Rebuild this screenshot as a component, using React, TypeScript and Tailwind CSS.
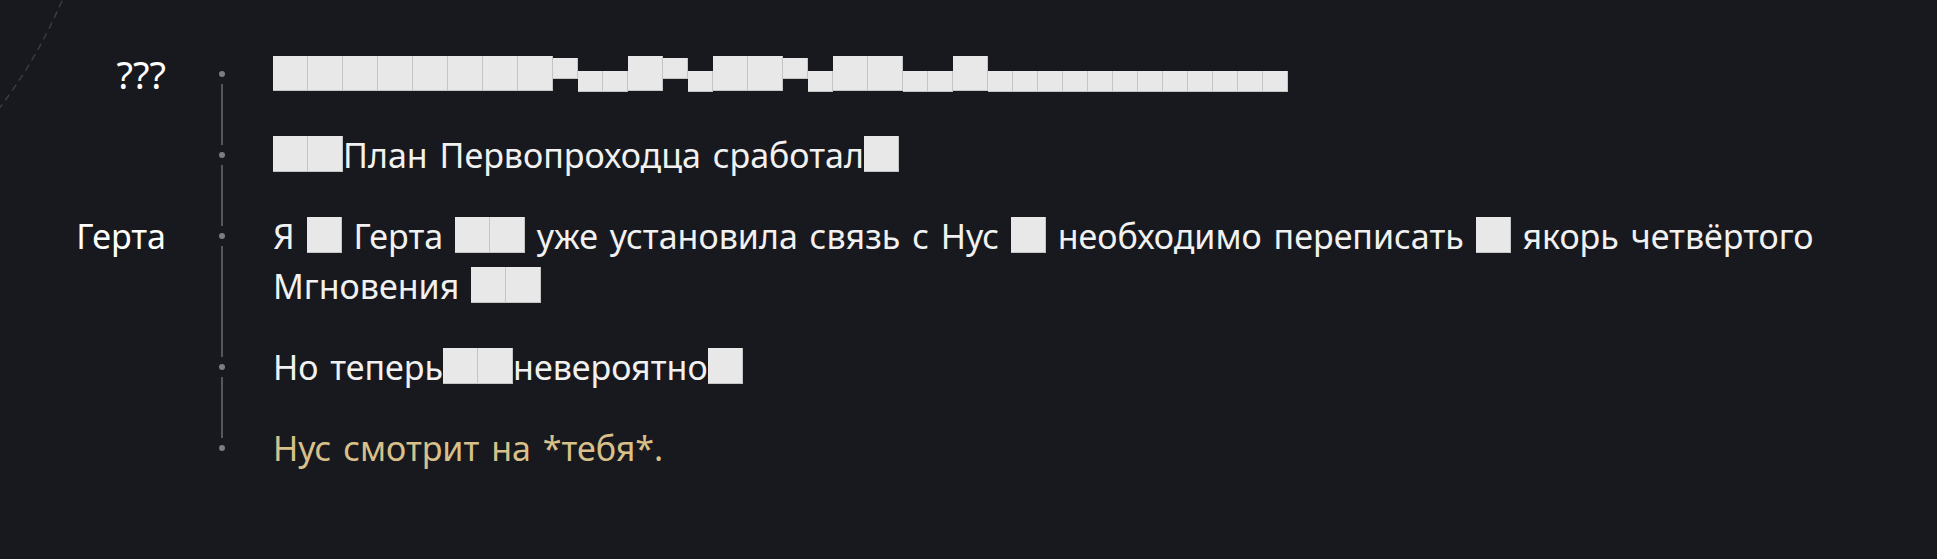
type Piece = string | { box: number };

interface Entry {
  speaker?: string;
  glitch?: boolean;
  gold?: boolean;
  parts?: Piece[];
}

// F = full tofu, T = short raised, L = short lowered
const glitchRow = 'FFFFFFFFTLLFTLFFTLFFLLF' + 'L'.repeat(12);

const entries: Entry[] = [
  { speaker: '???', glitch: true },
  { parts: [{ box: 2 }, 'План Первопроходца сработал', { box: 1 }] },
  {
    speaker: 'Герта',
    parts: [
      'Я ',
      { box: 1 },
      ' Герта ',
      { box: 2 },
      ' уже установила связь с Нус ',
      { box: 1 },
      ' необходимо переписать ',
      { box: 1 },
      ' якорь четвёртого Мгновения ',
      { box: 2 },
    ],
  },
  { parts: ['Но теперь', { box: 2 }, 'невероятно', { box: 1 }] },
  { gold: true, parts: ['Нус смотрит на *тебя*.'] },
];

function Tofu({ count }: { count: number }) {
  return (
    <>
      {Array.from({ length: count }).map((_, i) => (
        <span
          key={i}
          className="inline-block w-[35px] h-[36px] align-[-4px] bg-[#e7e8e7] shadow-[inset_-1px_-1px_0_#c3c4c3]"
        />
      ))}
    </>
  );
}

function GlitchLine() {
  return (
    <div className="flex h-[50px] items-start pt-[7px]">
      {glitchRow.split('').map((k, i) => {
        if (k === 'F') {
          return <span key={i} className="w-[35px] h-[35px] bg-[#e7e8e7] shadow-[inset_-1px_-1px_0_#c3c4c3]" />;
        }
        if (k === 'T') {
          return <span key={i} className="w-[25px] h-[21px] mt-[2px] bg-[#e7e8e7] shadow-[inset_-1px_-1px_0_#c3c4c3]" />;
        }
        return <span key={i} className="w-[25px] h-[21px] mt-[15px] bg-[#e7e8e7] shadow-[inset_-1px_-1px_0_#c3c4c3]" />;
      })}
    </div>
  );
}

export default function App() {
  return (
    <div className="relative w-full h-[559px] overflow-hidden bg-[#18191e] text-[#f1f1f1] font-['Noto_Sans',sans-serif] text-[34px] leading-[50px] [word-spacing:3px]">
      <svg className="absolute left-0 top-0" width="80" height="120" viewBox="0 0 80 120">
        <path
          d="M -2 110 Q 38 58 64 -4"
          fill="none"
          stroke="#3a3b41"
          strokeWidth="1.5"
          strokeDasharray="7 5"
        />
      </svg>

      <div className="flex flex-col pt-[49px]">
        {entries.map((e, i) => {
          const first = i === 0;
          const last = i === entries.length - 1;
          return (
            <div key={i} className={`flex ${last ? '' : 'pb-[31px]'}`}>
              <div
                className={`w-[166px] shrink-0 text-right text-white leading-[50px] ${
                  e.speaker === '???' ? 'text-[38px]' : ''
                }`}
              >
                {e.speaker ?? ''}
              </div>
              <div className={`ml-[53px] w-[6px] shrink-0 flex flex-col items-center ${last ? '' : '-mb-[31px]'}`}>
                <div className={`w-[2px] h-[15px] ${first ? '' : 'bg-[#56575c]'}`} />
                <div className="mt-[7px] w-[6px] h-[6px] rounded-full bg-[#7c7d82]" />
                {!last && <div className="mt-[7px] w-[2px] flex-1 bg-[#56575c]" />}
              </div>
              <div className={`ml-[48px] pr-[80px] flex-1 ${e.gold ? 'text-[#d8c08a]' : ''}`}>
                {e.glitch ? (
                  <GlitchLine />
                ) : (
                  <p>
                    {e.parts?.map((p, j) =>
                      typeof p === 'string' ? <span key={j}>{p}</span> : <Tofu key={j} count={p.box} />
                    )}
                  </p>
                )}
              </div>
            </div>
          );
        })}
      </div>
    </div>
  );
}
